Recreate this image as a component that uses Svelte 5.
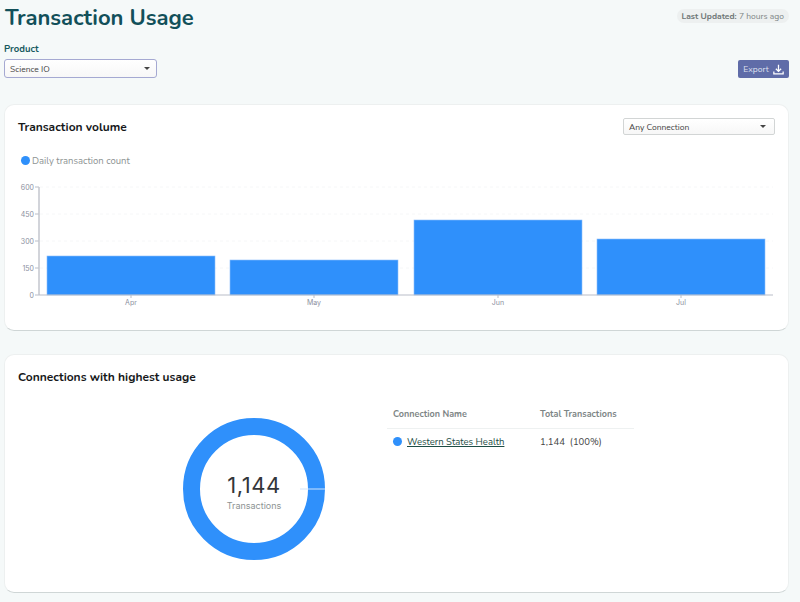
<script>
  const months = [
    { name: 'Apr', x: 47, y: 256 },
    { name: 'May', x: 230, y: 260 },
    { name: 'Jun', x: 414, y: 220 },
    { name: 'Jul', x: 597, y: 239 }
  ];
  const ticks = [
    { label: '600', y: 187 },
    { label: '450', y: 214 },
    { label: '300', y: 241 },
    { label: '150', y: 268 },
    { label: '0', y: 295 }
  ];
</script>

<div class="page">
  <header class="top">
    <h1>Transaction Usage</h1>
    <span class="updated"><b>Last Updated:</b> 7 hours ago</span>
  </header>

  <div class="filters">
    <div class="product">
      <span class="label">Product</span>
      <div class="select focus">
        <span>Science IO</span>
        <i class="caret"></i>
      </div>
    </div>
    <button class="export">
      Export
      <svg width="11" height="11" viewBox="0 0 13 13" fill="none" stroke="#fff" stroke-width="1.5">
        <path d="M6.5 1v7.5M3.4 5.6l3.1 3.1 3.1-3.1M1 9v2.6h11V9" />
      </svg>
    </button>
  </div>

  <section class="card volume">
    <div class="card-head">
      <h2>Transaction volume</h2>
      <div class="select plain">
        <span>Any Connection</span>
        <i class="caret"></i>
      </div>
    </div>
    <div class="legend"><i class="dot"></i>Daily transaction count</div>
    <svg class="chart" width="785" height="130" viewBox="4 180 785 130">
      {#each ticks as t}
        {#if t.label !== '0'}
          <line x1="40" x2="773" y1={t.y} y2={t.y} class="grid" />
        {/if}
        <line x1="35" x2="39" y1={t.y} y2={t.y} class="axis" />
        <text x="34" y={t.y + 2.5} text-anchor="end" class="tick">{t.label}</text>
      {/each}
      {#each months as m}
        <rect x={m.x} y={m.y} width="168" height={295 - m.y} class="bar" />
        <line x1={m.x + 84} x2={m.x + 84} y1="295" y2="298" class="axis" />
        <text x={m.x + 84} y="304.5" text-anchor="middle" class="tick">{m.name}</text>
      {/each}
      <line x1="39" x2="39" y1="187" y2="295" class="yaxis" />
      <line x1="39" x2="773" y1="295" y2="295" class="axis" />
    </svg>
  </section>

  <section class="card usage">
    <h2>Connections with highest usage</h2>
    <div class="usage-body">
      <div class="donut">
        <svg width="142" height="142" viewBox="0 0 142 142">
          <circle cx="71" cy="71" r="62.5" fill="none" stroke="#2f90fb" stroke-width="17" />
          <line x1="117" x2="142" y1="71" y2="71" stroke="#cfe4fd" stroke-width="1" />
        </svg>
        <div class="center">
          <span class="total">1,144</span>
          <span class="sub">Transactions</span>
        </div>
      </div>
      <table>
        <thead>
          <tr><th>Connection Name</th><th>Total Transactions</th></tr>
        </thead>
        <tbody>
          <tr>
            <td><i class="dot"></i><a href="#top">Western States Health</a></td>
            <td class="num">1,144&nbsp; (100%)</td>
          </tr>
        </tbody>
      </table>
    </div>
  </section>
</div>

<style>
  :global(body) {
    margin: 0;
    background: #f5f9f9;
  }
  .page {
    width: 800px;
    height: 602px;
    box-sizing: border-box;
    padding: 0 11px 0 4px;
    overflow: hidden;
    font-family: "Nunito", "Lato", "Liberation Sans", sans-serif;
    color: #222;
  }
  .top {
    display: flex;
    justify-content: space-between;
    align-items: flex-start;
    height: 43px;
  }
  h1 {
    margin: 2px 0 0 1px;
    font-size: 22px;
    line-height: 32px;
    font-weight: 700;
    color: #12505a;
  }
  .updated {
    margin-top: 9px;
    height: 14px;
    line-height: 14px;
    padding: 0 5px 0 4px;
    border-radius: 7px;
    background: #edf0f0;
    font-size: 8.5px;
    color: #7d8585;
  }
  .updated b { font-weight: 700; color: #6e7676; }
  .filters {
    display: flex;
    justify-content: space-between;
    align-items: flex-end;
    height: 35px;
  }
  .label {
    display: block;
    font-size: 9.5px;
    font-weight: 700;
    line-height: 13px;
    margin-bottom: 4px;
    color: #17595f;
  }
  .select {
    display: flex;
    align-items: center;
    justify-content: space-between;
    box-sizing: border-box;
    background: linear-gradient(#fff, #f7f7f7);
    border: 1px solid #d2d5d5;
    border-radius: 2px;
    font-size: 8.5px;
    color: #444;
  }
  .focus {
    width: 153px;
    height: 19px;
    padding: 0 6px 0 5px;
    border: 1.5px solid #a5a9d2;
    border-radius: 3px;
  }
  .plain {
    width: 152px;
    height: 17px;
    padding: 0 8px 0 5px;
  }
  .caret {
    width: 0;
    height: 0;
    border-left: 3px solid transparent;
    border-right: 3px solid transparent;
    border-top: 3.5px solid #444;
  }
  .export {
    display: flex;
    align-items: center;
    justify-content: center;
    gap: 4px;
    width: 51px;
    height: 18px;
    padding: 0;
    border: 0;
    border-radius: 2px;
    background: #5f6ca8;
    color: #dfe2f0;
    font-family: inherit;
    font-size: 8.5px;
  }
  .card {
    box-sizing: border-box;
    background: #fff;
    border: 1px solid #edf0f0;
    border-bottom: 1px solid #cfd6d6;
    border-radius: 10px;
    overflow: hidden;
  }
  .volume {
    margin-top: 26px;
    height: 227px;
  }
  .usage {
    margin-top: 23px;
    height: 239px;
    padding: 14px 13px 0;
  }
  .card-head {
    display: flex;
    justify-content: space-between;
    align-items: flex-start;
    padding: 13px 13px 0;
  }
  .card-head h2 { margin-top: 1px; }
  h2 {
    margin: 0;
    font-size: 12px;
    line-height: 17px;
    font-weight: 700;
    color: #16181a;
  }
  .legend {
    display: flex;
    align-items: center;
    gap: 2px;
    margin: 18px 0 0 16px;
    font-size: 9.5px;
    line-height: 13px;
    color: #8d9393;
  }
  .dot {
    display: inline-block;
    flex: none;
    width: 9px;
    height: 9px;
    border-radius: 50%;
    background: #2f90fb;
  }
  .chart { display: block; margin: 13px 0 0 -1px; }
  .grid { stroke: #f6f7f8; stroke-width: 1; stroke-dasharray: 3 3; }
  .axis { stroke: #b9bdc8; stroke-width: 1; }
  .yaxis { stroke: #c3c6ce; stroke-width: 1.5; }
  .bar { fill: #2f90fb; stroke: #8dbefa; stroke-width: 0.6; }
  .tick { font-size: 7px; fill: #8b90a0; font-family: "Inter", "Liberation Sans", sans-serif; }
  .usage-body {
    display: flex;
    margin-top: 23px;
  }
  .donut {
    position: relative;
    width: 142px;
    height: 142px;
    margin: 9px 0 0 165px;
  }
  .donut svg { display: block; }
  .center {
    position: absolute;
    inset: 0;
    display: flex;
    flex-direction: column;
    align-items: center;
    justify-content: center;
    padding-top: 5px;
  }
  .total {
    font-family: "Inter", "Liberation Sans", sans-serif;
    font-size: 22px;
    letter-spacing: 0.5px;
    line-height: 26px;
    font-weight: 400;
    color: #33363a;
  }
  .sub {
    font-family: "Inter", "Liberation Sans", sans-serif;
    font-size: 9px;
    line-height: 13px;
    margin-top: 1px;
    color: #8d9393;
  }
  table {
    margin: -10px 0 0 62px;
    align-self: flex-start;
    width: 247px;
    border-collapse: collapse;
    font-size: 9px;
  }
  th {
    text-align: left;
    font-weight: 700;
    color: #7d8585;
    height: 29px;
    padding: 0 0 0 6px;
    border-bottom: 1px solid #eef1f1;
  }
  th:last-child { width: 94px; }
  td {
    height: 25px;
    padding: 0 0 0 6px;
    color: #444;
    font-size: 9.5px;
  }
  td .dot { vertical-align: -1px; margin-right: 5px; }
  a { color: #1d4d45; text-decoration: underline; }
</style>
